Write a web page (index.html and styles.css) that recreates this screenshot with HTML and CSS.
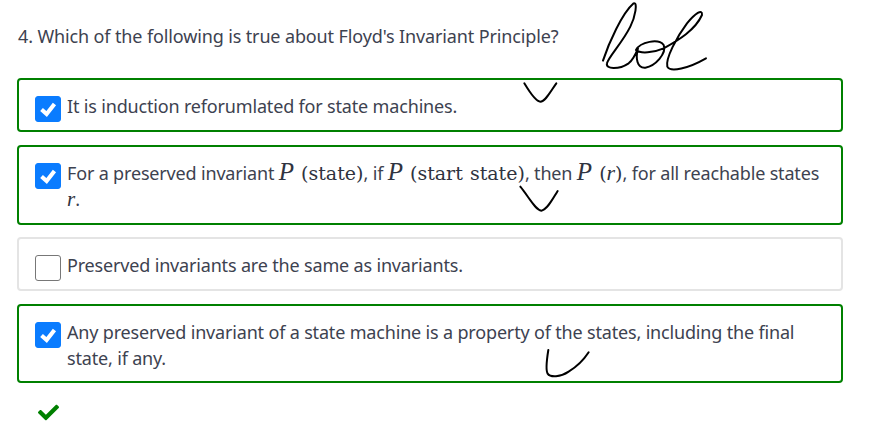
FILE: index.html
```html
<!DOCTYPE html>
<html lang="en">
<head>
    <meta charset="UTF-8">
    <title>Quiz question 4</title>
    <link rel="stylesheet" href="styles.css">
</head>
<body>
    <main class="question">
        <p class="prompt">4. Which of the following is true about Floyd's Invariant Principle?</p>

        <ul class="answers">
            <li class="answer correct">
                <span class="box checked"><svg viewBox="0 0 26 26"><path d="M6 13.5l5.5 5 8.5-11"/></svg></span>
                <span class="label">It is induction reforumlated for state machines.</span>
            </li>
            <li class="answer correct tall">
                <span class="box checked"><svg viewBox="0 0 26 26"><path d="M6 13.5l5.5 5 8.5-11"/></svg></span>
                <span class="label">For a preserved invariant <i class="var">P</i><span class="math"> (<b>state</b>)</span>, if <i class="var">P</i><span class="math"> (<b>start state</b>)</span>, then <i class="var">P</i><span class="math"> (<i>r</i>)</span>, for all reachable states <i class="var small">r</i>.</span>
            </li>
            <li class="answer">
                <span class="box"></span>
                <span class="label">Preserved invariants are the same as invariants.</span>
            </li>
            <li class="answer correct">
                <span class="box checked"><svg viewBox="0 0 26 26"><path d="M6 13.5l5.5 5 8.5-11"/></svg></span>
                <span class="label">Any preserved invariant of a state machine is a property of the states, including the final state, if any.</span>
            </li>
        </ul>

        <svg class="result" viewBox="0 0 512 512"><path d="M173.898 439.404l-166.4-166.4c-9.997-9.997-9.997-26.206 0-36.204l36.203-36.204c9.997-9.998 26.207-9.998 36.204 0L192 312.69 432.095 72.596c9.997-9.997 26.207-9.997 36.204 0l36.203 36.204c9.997 9.997 9.997 26.206 0 36.204l-294.4 294.401c-9.998 9.997-26.207 9.997-36.204-.001z"/></svg>
    </main>

    <!-- pen marks drawn over the page -->
    <svg class="ink" viewBox="0 0 872 429">
        <g transform="translate(432 0) scale(0.3333)">
            <path d="M513 182C530 130 570 40 605 10C618 5 610 50 595 80C570 130 530 170 525 190C520 208 560 210 590 190C605 178 612 160 618 145C610 175 615 205 640 203C670 198 705 160 695 135C680 115 625 125 612 150C625 162 665 158 695 145C740 120 790 90 810 45C812 25 790 40 765 70C735 110 700 175 706 200C715 218 770 205 822 175"/>
            <path d="M277 250C295 280 315 305 325 305C340 305 355 275 373 250"/>
            <path d="M265 560C290 590 310 630 328 632C345 630 360 600 377 573"/>
        </g>
        <g transform="translate(432 215) scale(0.3333)">
            <path d="M349 405C345 430 340 465 347 476C355 488 385 487 410 470C435 455 455 435 470 412"/>
        </g>
    </svg>
</body>
</html>
```

FILE: styles.css
```css
body {
    margin: 0;
    background-color: #fff;
    color: #3d4250;
    font-family: "Noto Sans", Arial, sans-serif;
    font-size: 18px;
    letter-spacing: -0.17px;
    line-height: 26px;
}
.question {
    padding: 23px 29px 0 17px;
}
.prompt {
    margin: 0 0 29px 1px;
    letter-spacing: -0.13px;
}
.answers {
    list-style: none;
    margin: 0;
    padding: 0;
    display: flex;
    flex-direction: column;
    gap: 12.67px;
}
.answer {
    display: flex;
    align-items: flex-start;
    gap: 6px;
    padding: 13px 16px 8px;
    border: 2px solid #e4e4e4;
    border-radius: 4px;
}
.answer.correct {
    border-color: #008000;
}
.answer.tall {
    padding-bottom: 9px;
}
.box {
    flex: none;
    width: 24px;
    height: 24px;
    margin-top: 3px;
    border: 1px solid #777;
    border-radius: 3px;
    background-color: #fff;
}
.box.checked {
    border-color: #0a7cff;
    background-color: #0a7cff;
}
.box svg {
    display: block;
    width: 24px;
    height: 24px;
    fill: none;
    stroke: #fff;
    stroke-width: 4.4;
}
.label {
    padding-bottom: 2px;
}
.var {
    font-family: "Liberation Serif", serif;
    font-size: 25px;
    line-height: 0;
    letter-spacing: 0;
    color: #2f3340;
}
.var.small {
    font-size: 21px;
}
.math {
    font-family: "DejaVu Serif", serif;
    font-size: 19px;
    line-height: 0;
    letter-spacing: 0;
    word-spacing: 1px;
    color: #2f3340;
}
.math b {
    font-weight: normal;
}
.math i {
    font-family: "Liberation Serif", serif;
    font-size: 22px;
}
.result {
    display: block;
    width: 21px;
    height: 21px;
    margin: 19px 0 0 21px;
    fill: #008000;
}
.ink {
    position: absolute;
    top: 0;
    left: 0;
    width: 872px;
    height: 429px;
    fill: none;
    stroke: #000;
    stroke-width: 6;
    stroke-linecap: round;
    stroke-linejoin: round;
    pointer-events: none;
}
```
